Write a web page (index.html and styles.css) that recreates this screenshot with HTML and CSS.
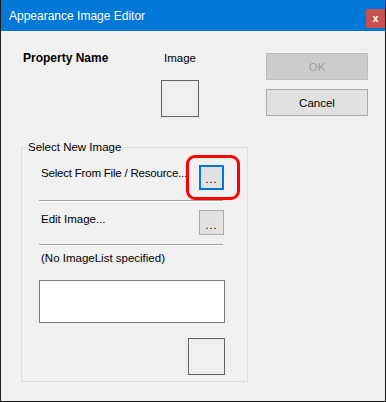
FILE: index.html
```html
<!DOCTYPE html>
<html lang="en">
<head>
    <meta charset="UTF-8">
    <meta name="viewport" content="width=device-width, initial-scale=1.0">
    <title>Appearance Image Editor</title>
    <link rel="stylesheet" href="styles.css">
</head>
<body>
    <div class="window">
        <div class="titlebar">
            <span class="title">Appearance Image Editor</span>
            <button class="close-btn" type="button">x</button>
        </div>

        <div class="top">
            <div class="prop-name">Property Name</div>
            <div class="prop-image">
                <div class="prop-image-label">Image</div>
                <div class="preview-box"></div>
            </div>
            <div class="actions">
                <button class="btn" type="button" disabled>OK</button>
                <button class="btn" type="button">Cancel</button>
            </div>
        </div>

        <fieldset class="group">
            <legend>Select New Image</legend>

            <div class="row row-first">
                <span class="row-label">Select From File / Resource...</span>
                <div class="browse-wrap">
                    <button class="browse focused" type="button">...</button>
                    <div class="highlight"></div>
                </div>
            </div>
            <div class="separator"></div>

            <div class="row row-second">
                <span class="row-label">Edit Image...</span>
                <button class="browse" type="button">...</button>
            </div>
            <div class="separator sep-second"></div>

            <div class="note">(No ImageList specified)</div>
            <div class="list-box"></div>
            <div class="small-box"></div>
        </fieldset>
    </div>
</body>
</html>
```

FILE: styles.css
```css
* {
    box-sizing: border-box;
}

body {
    margin: 0;
    font-family: "Liberation Sans", Arial, sans-serif;
    font-size: 11.5px;
    color: #000;
    background: #f0f0f0;
}

.window {
    width: 386px;
    height: 402px;
    background: #f0f0f0;
    border: 1px solid #1c1c1c;
    border-top: none;
}

.titlebar {
    height: 31px;
    background: #0078d7;
    display: flex;
    align-items: flex-start;
    justify-content: space-between;
    padding-left: 8px;
}

.title {
    color: #fff;
    font-size: 12px;
    line-height: 15px;
    margin-top: 9px;
}

.close-btn {
    width: 19px;
    height: 19px;
    margin-top: 9px;
    padding: 0;
    border: none;
    background: #c75050;
    color: #fff;
    font-family: "Liberation Sans", Arial, sans-serif;
    font-weight: bold;
    font-size: 10px;
    line-height: 17px;
}

.top {
    display: flex;
    align-items: flex-start;
    padding: 20px 17px 0 22px;
    height: 109px;
}

.prop-name {
    font-weight: bold;
    font-size: 12px;
    line-height: 15px;
    width: 138px;
}

.prop-image {
    width: 38px;
    display: flex;
    flex-direction: column;
    align-items: center;
}

.prop-image-label {
    line-height: 15px;
    white-space: nowrap;
}

.preview-box {
    width: 38px;
    height: 37px;
    margin-top: 14px;
    border: 1px solid #646464;
}

.actions {
    margin-left: auto;
    margin-top: 2px;
    display: flex;
    flex-direction: column;
    gap: 9px;
}

.btn {
    width: 102px;
    height: 27px;
    background: #e1e1e1;
    border: 1px solid #adadad;
    font-family: "Liberation Sans", Arial, sans-serif;
    font-size: 11.5px;
    color: #000;
    padding: 0;
}

.btn:disabled {
    background: #cccccc;
    border-color: #bfbfbf;
    color: #a0a0a0;
}

.group {
    margin: 0 0 0 20px;
    width: 227px;
    height: 242px;
    border: 1px solid #dcdcdc;
    padding: 10px 21px 6px 17px;
}

.group legend {
    margin-left: -12px;
    padding: 0 1px;
    line-height: 15px;
}

.row {
    display: flex;
    justify-content: space-between;
    align-items: flex-start;
    width: 185px;
}

.row-label {
    padding-left: 2px;
    line-height: 15px;
    white-space: nowrap;
}

.row-first .row-label {
    margin-top: 1px;
    letter-spacing: -0.2px;
}

.row-second {
    margin-top: 8px;
}

.row-second .row-label {
    margin-top: 2px;
}

.browse-wrap {
    position: relative;
    width: 25px;
    height: 25px;
}

.browse {
    width: 25px;
    height: 25px;
    padding: 5px 0 0;
    background: #e1e1e1;
    border: 1px solid #adadad;
    font-family: "Liberation Sans", Arial, sans-serif;
    font-size: 11px;
    letter-spacing: 1px;
    line-height: 15px;
    color: #000;
}

.browse.focused {
    border: 2px solid #0078d7;
    padding-top: 4px;
}

.highlight {
    position: absolute;
    left: -13px;
    top: -10px;
    width: 54px;
    height: 45px;
    border: 3px solid #ff0000;
    border-radius: 9px;
}

.separator {
    width: 184px;
    margin-top: 10px;
    border-top: 1px solid #a0a0a0;
    border-bottom: 1px solid #ffffff;
}

.sep-second {
    margin-top: 9px;
}

.note {
    margin-top: 5px;
    padding-left: 2px;
    line-height: 15px;
}

.list-box {
    width: 186px;
    height: 43px;
    margin-top: 14px;
    background: #fff;
    border: 1px solid #7a7a7a;
}

.small-box {
    width: 37px;
    height: 37px;
    margin: 15px 0 0 149px;
    border: 1px solid #646464;
}
```
